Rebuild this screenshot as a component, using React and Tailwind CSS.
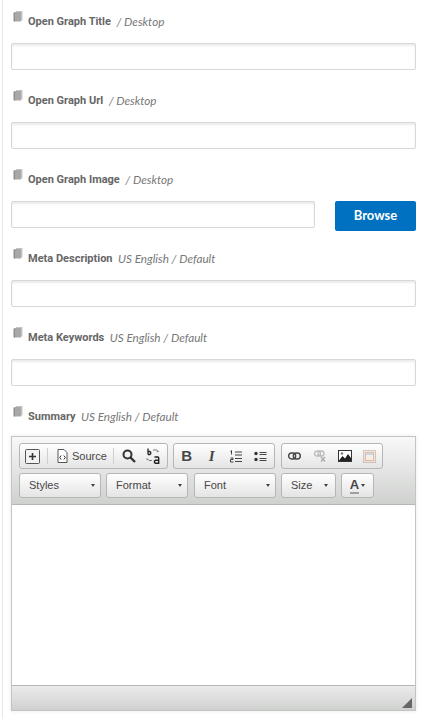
function Stack() {
  return (
    <svg width="10" height="12" viewBox="0 0 10 12" className="shrink-0">
      <path d="M3 0h6.5v9.5H3z" fill="#c4c4c4" />
      <path d="M1.5 1h6.5v9.5H1.5z" fill="#a8a8a8" />
      <path d="M0.5 1.5h1.5v9.5l-1.5-1z" fill="#8f8f8f" />
    </svg>
  );
}

function Label({ name, rest }) {
  return (
    <div className="flex h-[14px] items-center leading-[14px]">
      <span className="mr-[6px] mt-[-8px] ml-[2px] w-[9px]"><Stack /></span>
      <span className="mt-[2px] text-[11px] font-bold text-[#666] font-['Roboto',sans-serif]">{name}</span>
      <span className="ml-[5.5px] text-[11.7px] italic text-[#777] font-['Lato',sans-serif]">{rest}</span>
    </div>
  );
}

const inputCls = "block h-[27px] w-full rounded-[2px] border border-[#d8d8d8] bg-white shadow-[inset_0_2px_2px_#ececec] outline-none";

function Field({ name, rest }) {
  return (
    <div className="mb-[23px]">
      <Label name={name} rest={rest} />
      <input className={`mt-[15px] ${inputCls}`} />
    </div>
  );
}

const groupCls = "flex h-[26px] items-center rounded-[3px] border border-[#b6b6b6] bg-gradient-to-b from-[#ffffff] to-[#e4e4e4]";

function Select({ label, w }) {
  return (
    <div className={`flex h-[25px] items-center justify-between rounded-[3px] border border-[#b6b6b6] bg-gradient-to-b from-[#ffffff] to-[#e4e4e4] pl-[9px] pr-[5px] text-[11px] text-[#474747] font-['Liberation_Sans',sans-serif] ${w}`}>
      <span>{label}</span>
      <span className="h-0 w-0 border-x-[2.5px] border-t-[3px] border-x-transparent border-t-[#444]" />
    </div>
  );
}

function Btn({ children, cls = "w-[24px]" }) {
  return <div className={`flex h-full items-center justify-center ${cls}`}>{children}</div>;
}

const Sep = () => <div className="h-[16px] w-px bg-[#d0d0d0]" />;

export default function App() {
  return (
    <div className="h-[719px] w-[425px] overflow-hidden bg-white">
      <div className="ml-[2px] h-full border-l border-[#e9e9e9] pl-[8px] pr-[9px] pt-[14px]">
        <Field name="Open Graph Title" rest="/ Desktop" />
        <Field name="Open Graph Url" rest="/ Desktop" />
        <div className="mb-[23px]">
          <Label name="Open Graph Image" rest="/ Desktop" />
          <div className="mt-[15px] flex h-[27px] items-start gap-[20px]">
            <input className={`${inputCls} !w-[304px]`} />
            <button className="h-[30px] w-[81px] rounded-[2px] bg-[#0070c0] text-[13px] font-bold text-white font-['Lato',sans-serif]">Browse</button>
          </div>
        </div>
        <Field name="Meta Description" rest="US English / Default" />
        <Field name="Meta Keywords" rest="US English / Default" />
        <Label name="Summary" rest="US English / Default" />

        <div className="mt-[13px] h-[275px] border border-[#c4c4c4] shadow-[0_0_4px_#e8e8e8]">
          <div className="h-[68px] border-b border-[#b6b6b6] bg-gradient-to-b from-[#f8f8f8] to-[#cfd1cf] pl-[7px] pt-[6px]">
            <div className="flex gap-[5px]">
              <div className={`${groupCls} w-[149px]`}>
                <Btn cls="w-[27px] !justify-start pl-[5px]">
                  <svg width="15" height="15" viewBox="0 0 15 15">
                    <rect x="0.5" y="0.5" width="14" height="14" rx="1" fill="#f2f2f2" stroke="#555" />
                    <path d="M7.5 4v7M4 7.5h7" stroke="#333" strokeWidth="1.6" />
                  </svg>
                </Btn>
                <Sep />
                <div className="flex h-full w-[65px] items-center gap-[4px] pl-[9px] text-[11px] text-[#474747] font-['Liberation_Sans',sans-serif]">
                  <svg width="11" height="14" viewBox="0 0 11 14">
                    <path d="M1 .5h6l3 3v10H1z" fill="#fff" stroke="#555" />
                    <path d="M4.2 6.5 2.7 8.5l1.5 2M6.8 6.5l1.5 2-1.5 2" fill="none" stroke="#333" />
                  </svg>
                  <span>Source</span>
                </div>
                <Sep />
                <Btn cls="w-[26px] pl-[3px]">
                  <svg width="14" height="14" viewBox="0 0 14 14">
                    <circle cx="5.5" cy="5.5" r="4" fill="none" stroke="#333" strokeWidth="2" />
                    <path d="m8.5 8.5 4.500 4.500" stroke="#333" strokeWidth="2.4" />
                  </svg>
                </Btn>
                <Btn cls="w-[26px]">
                  <svg width="14" height="16" viewBox="0 0 14 16">
                    <path d="M2 .5v6M2 3.500h1.800l.9.800v1.400l-.9.800H2" fill="none" stroke="#222" strokeWidth="1.300" />
                    <path d="M7 2h3.500l2 1.500M12.500 3.500l-1.700 .2M1 10.500l2 2h3M1 10.500l.2 1.700" fill="none" stroke="#777" />
                    <path d="M8.500 9h3.500l.7.800V15.300H9.300l-.8-.8v-1.500l.8-.7h3.400" fill="none" stroke="#222" strokeWidth="1.400" />
                  </svg>
                </Btn>
              </div>
              <div className={`${groupCls} w-[102px] px-[1px]`}>
                <Btn cls="w-[25px]"><span className="mr-[1px] text-[15px] font-bold text-[#474747] font-['Liberation_Sans',sans-serif]">B</span></Btn>
                <Btn cls="w-[25px]"><span className="text-[15px] font-bold italic text-[#474747] font-['Liberation_Serif',serif]">I</span></Btn>
                <Btn cls="w-[25px]">
                  <svg width="13" height="13" viewBox="0 0 13 13">
                    <path d="M1.500 .5v4M.5 1.500l1-1" fill="none" stroke="#444" />
                    <path d="M.5 8h2.500v1.500H.5V12h3" fill="none" stroke="#444" />
                    <path d="M5 2h7M5 5h7M5 8.500h7M5 11.500h7" stroke="#444" />
                  </svg>
                </Btn>
                <Btn cls="w-[25px]">
                  <svg width="13" height="11" viewBox="0 0 13 11">
                    <circle cx="2" cy="2.500" r="1.700" fill="#333" />
                    <circle cx="2" cy="8.500" r="1.700" fill="#333" />
                    <path d="M5.500 1.500h7M5.500 3.500h7M5.500 7.500h7M5.500 9.500h7" stroke="#444" />
                  </svg>
                </Btn>
              </div>
              <div className={`${groupCls} ml-[1px] w-[102px]`}>
                <Btn cls="w-[25px]">
                  <svg width="13" height="8" viewBox="0 0 13 8">
                    <rect x="0.700" y="1" width="7" height="6" rx="3" fill="none" stroke="#444" strokeWidth="1.400" />
                    <rect x="5.300" y="1" width="7" height="6" rx="3" fill="none" stroke="#444" strokeWidth="1.400" />
                  </svg>
                </Btn>
                <Btn cls="w-[25px]">
                  <svg width="12" height="12" viewBox="0 0 12 12" opacity=".45">
                    <rect x="0.500" y="1" width="6" height="5" rx="2.500" fill="none" stroke="#777" strokeWidth="1.300" />
                    <rect x="4" y="1" width="6" height="5" rx="2.500" fill="none" stroke="#777" strokeWidth="1.300" />
                    <path d="m7 7 4 4.500m0-4.500-4 4.500" stroke="#555" strokeWidth="1.200" />
                  </svg>
                </Btn>
                <Btn cls="w-[25px]">
                  <svg width="14" height="12" viewBox="0 0 14 12">
                    <rect x="0.500" y="0.500" width="13" height="11" fill="#fff" stroke="#333" />
                    <path d="m1 10.500 3.500-4.500 2.500 2.500L10 4l3 4v3H1z" fill="#222" />
                    <circle cx="4" cy="3.500" r="1.200" fill="#777" />
                  </svg>
                </Btn>
                <Btn cls="w-[25px]">
                  <svg width="13" height="13" viewBox="0 0 13 13" opacity=".6">
                    <rect x="0.500" y="0.500" width="12" height="12" fill="#f4dcc4" stroke="#b9a9a0" />
                    <rect x="2.500" y="2.500" width="8" height="8" fill="#fbeee0" stroke="#d69a7a" />
                    <path d="M3 3h7v2H3z" fill="#a9c5e4" />
                  </svg>
                </Btn>
              </div>
            </div>
            <div className="mt-[4px] flex gap-[5px]">
              <Select label="Styles" w="w-[82px]" />
              <Select label="Format" w="w-[82px]" />
              <Select label="Font" w="w-[82px] ml-[1px]" />
              <Select label="Size" w="w-[55px] !pr-[7px]" />
              <div className="flex h-[25px] w-[33px] items-center justify-center gap-[2px] rounded-[3px] border border-[#b6b6b6] bg-gradient-to-b from-[#ffffff] to-[#e4e4e4]">
                <span className="border-b-2 border-[#a0a0a0] text-[13px] font-bold leading-[14px] text-[#474747] font-['Liberation_Sans',sans-serif]">A</span>
                <span className="h-0 w-0 border-x-[2.500px] border-t-[3px] border-x-transparent border-t-[#444]" />
              </div>
            </div>
          </div>
          <div className="h-[180px] bg-white" />
          <div className="flex h-[25px] items-end justify-end border-t border-[#b6b6b6] bg-gradient-to-b from-[#ebebeb] to-[#cfd1cf] pb-[2px] pr-[3px]">
            <svg width="10" height="10" viewBox="0 0 10 10"><path d="M10 0v10H0z" fill="#666" /></svg>
          </div>
        </div>
      </div>
    </div>
  );
}
